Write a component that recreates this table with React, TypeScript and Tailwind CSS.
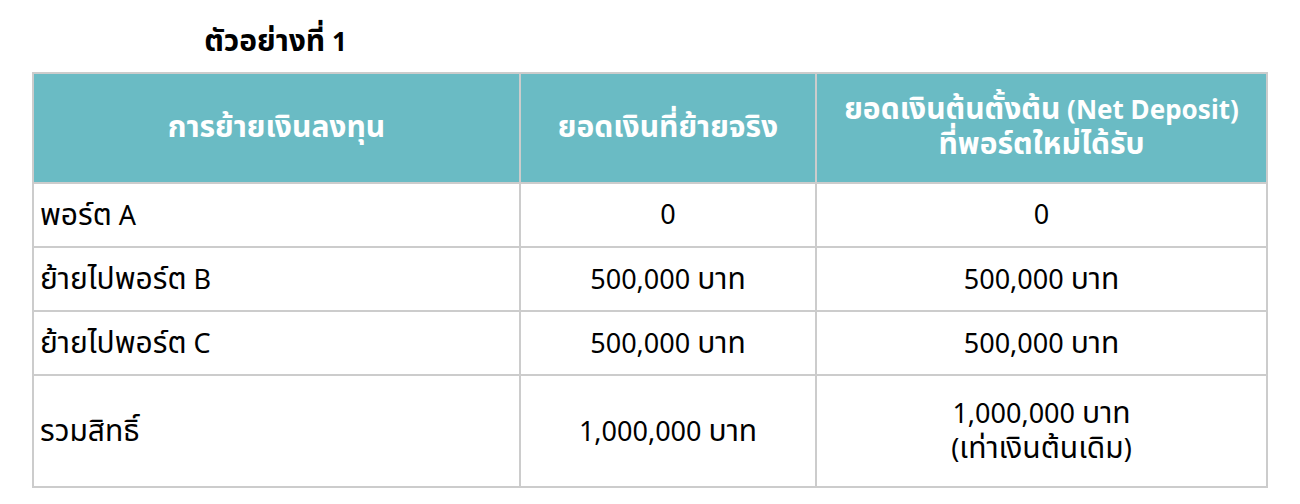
// Thai glyphs render small in the fallback font, so Thai runs get a bigger size than Latin/digits
function Mixed({ text, bold }: { text: string; bold?: boolean }) {
  const parts = text.split(/([\u0E00-\u0E7F]+)/).filter((p) => p !== '');
  return (
    <>
      {parts.map((p, i) =>
        /[\u0E00-\u0E7F]/.test(p) ? (
          <span key={i} className="text-[30px]">{p}</span>
        ) : (
          <span key={i} className={bold ? 'text-[26px]' : 'text-[27px]'}>{p}</span>
        )
      )}
    </>
  );
}

const rows = [
  { name: 'พอร์ต A', moved: '0', net: ['0'], tall: false },
  { name: 'ย้ายไปพอร์ต B', moved: '500,000 บาท', net: ['500,000 บาท'], tall: false },
  { name: 'ย้ายไปพอร์ต C', moved: '500,000 บาท', net: ['500,000 บาท'], tall: false },
  { name: 'รวมสิทธิ์', moved: '1,000,000 บาท', net: ['1,000,000 บาท', '(เท่าเงินต้นเดิม)'], tall: true },
];

export default function App() {
  return (
    <div className="min-h-screen bg-white pl-[32px] pt-[20px] text-black" style={{ fontFamily: '"Noto Sans", "Noto Sans Thai", sans-serif' }}>
      <div className="w-[487px] h-[52px] text-center font-bold leading-[40px]">
        <Mixed text="ตัวอย่างที่ 1" bold />
      </div>
      <table className="w-[1234px] table-fixed border-collapse leading-[30px]">
        <colgroup>
          <col className="w-[487px]" />
          <col className="w-[296px]" />
          <col className="w-[451px]" />
        </colgroup>
        <thead>
          <tr className="h-[110px] bg-[#6abbc4] text-white font-bold">
            <th className="border-2 border-[#cccccc] px-2 text-center">
              <Mixed text="การย้ายเงินลงทุน" bold />
            </th>
            <th className="border-2 border-[#cccccc] px-2 text-center">
              <Mixed text="ยอดเงินที่ย้ายจริง" bold />
            </th>
            <th className="border-2 border-[#cccccc] px-1 text-center">
              <div><Mixed text="ยอดเงินต้นตั้งต้น (Net Deposit)" bold /></div>
              <div><Mixed text="ที่พอร์ตใหม่ได้รับ" bold /></div>
            </th>
          </tr>
        </thead>
        <tbody>
          {rows.map((r) => (
            <tr key={r.name} className={r.tall ? 'h-[112px]' : 'h-[64px]'}>
              <td className="border-2 border-[#cccccc] px-[6px] pt-[2px] text-left">
                <Mixed text={r.name} />
              </td>
              <td className="border-2 border-[#cccccc] px-2 pt-[2px] text-center">
                <Mixed text={r.moved} />
              </td>
              <td className="border-2 border-[#cccccc] px-2 pt-[2px] text-center">
                {r.net.map((line, i) => (
                  <div key={i}>
                    <Mixed text={line} />
                  </div>
                ))}
              </td>
            </tr>
          ))}
        </tbody>
      </table>
    </div>
  );
}
